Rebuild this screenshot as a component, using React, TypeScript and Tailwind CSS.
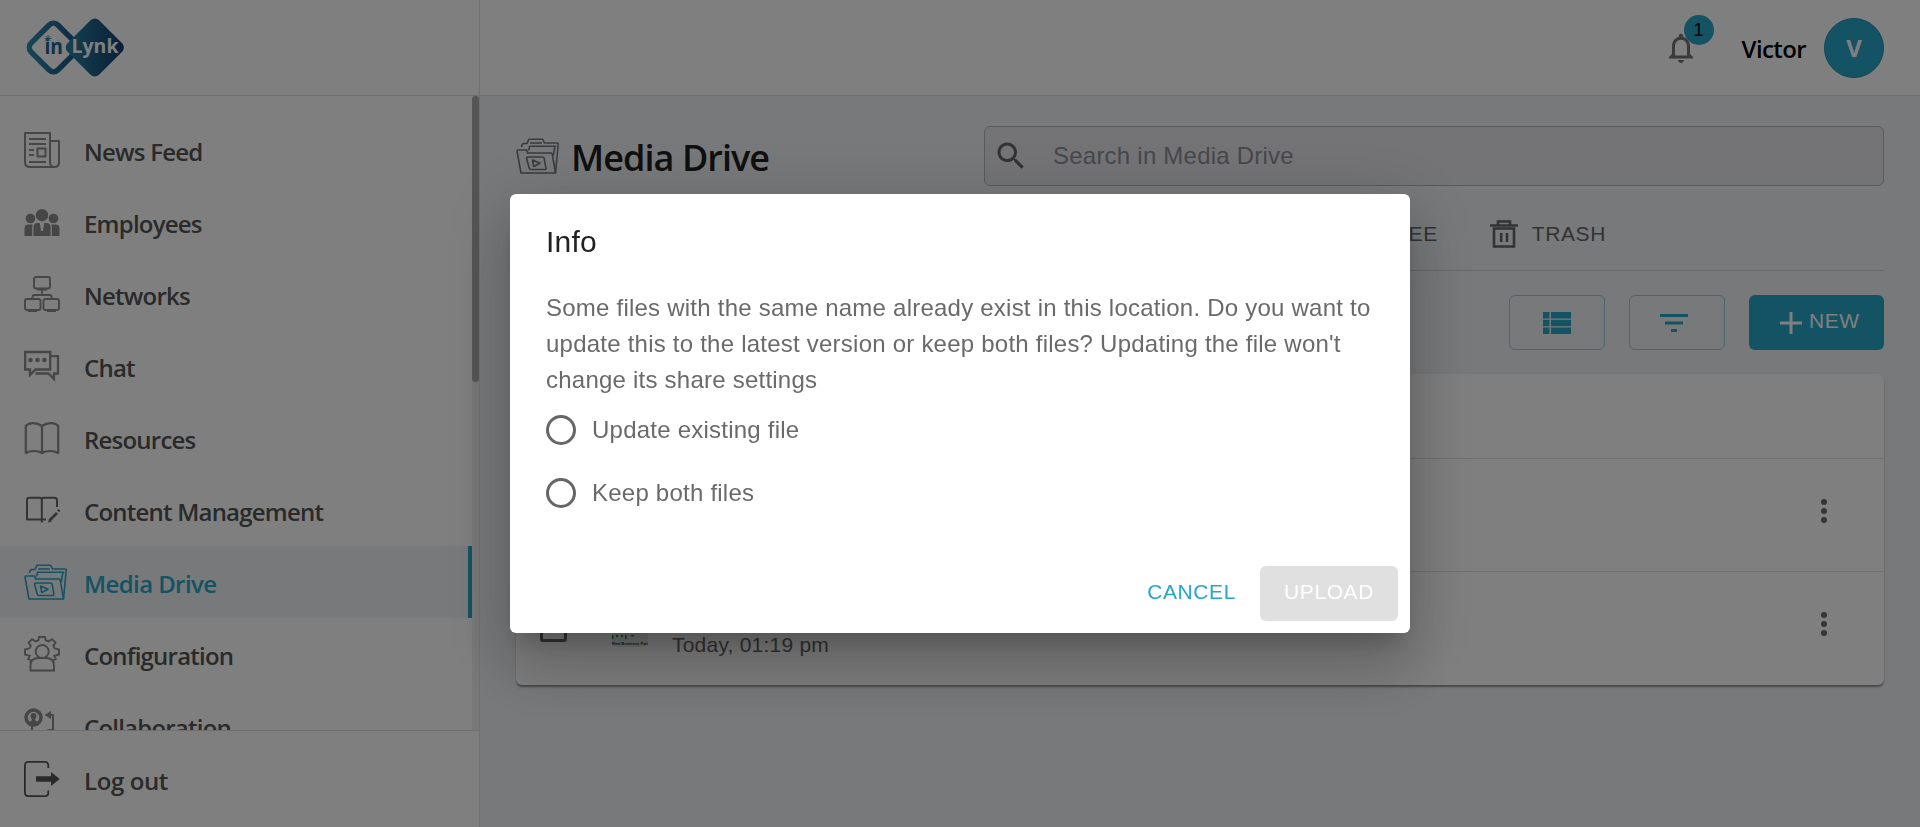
import type { ReactNode } from "react";

const Icon = ({ children, w = 36 }: { children: ReactNode; w?: number }) => (
  <svg
    width={w}
    height="36"
    viewBox={`0 0 ${w} 36`}
    fill="none"
    stroke="currentColor"
    strokeWidth="2"
    strokeLinejoin="round"
    className="shrink-0"
  >
    {children}
  </svg>
);

const NewsIcon = () => (
  <Icon>
    <path d="M1 1h25v29q0 5 4.500 5H6q-5 0-5-5zM26 9h9v21q0 5-4.500 5T26 30" />
    <path d="M5 7h17M5 12h17M5 18h5M5 23h5M5 30h17M13.500 16.500h8v8h-8z" />
  </Icon>
);

const EmployeesIcon = () => (
  <Icon>
    <g fill="currentColor" stroke="none">
      <circle cx="18" cy="11.200" r="6.200" />
      <circle cx="6.500" cy="14.500" r="4.800" />
      <circle cx="29.500" cy="14.500" r="4.800" />
      <path d="M9.500 32V23q0-4 4-4h2.300l1.200 8h2l1.200-8h2.300q4 0 4 4v9z" />
      <path d="M.5 32v-7.500q0-4 3.500-4h4.800q-.6 1.200-.6 3V32zM35.500 32v-7.500q0-4-3.500-4h-4.800q.6 1.200.6 3V32z" />
    </g>
  </Icon>
);

const NetworksIcon = () => (
  <Icon>
    <g strokeWidth="1.900">
      <rect x="10" y="1" width="16" height="11.500" rx="2" />
      <rect x="1" y="23" width="15.500" height="11" rx="2" />
      <rect x="19.500" y="23" width="15.500" height="11" rx="2" />
      <path d="M13 13.500h10M18 13v6M8.500 23v-2q0-2 2-2h15q2 0 2 2v2M4 35.200h9M23 35.200h9" />
    </g>
  </Icon>
);

const ChatIcon = () => (
  <Icon>
    <path
      strokeLinejoin="miter"
      strokeWidth="2.300"
      d="M1.200 4h25v17.500H11.500L6 27V21.500H1.200zM26 8.200h8v17.300h-4v5.500L24.500 25.500H11.500"
    />
    <g fill="currentColor" stroke="none">
      <circle cx="6.500" cy="12" r="2.300" />
      <circle cx="13.500" cy="12" r="2.300" />
      <circle cx="20.500" cy="12" r="2.300" />
    </g>
  </Icon>
);

const BookIcon = () => (
  <Icon>
    <path
      strokeWidth="2.200"
      d="M18 6Q14 3 8.500 3.200 4 3.400 1.800 6v27Q5 31 10 31q5 0 8 2 3-2 8-2 5 0 8.200 2V6Q32 3.400 27.500 3.200 22 3 18 6zm0 0v27"
    />
  </Icon>
);

const ContentIcon = () => (
  <Icon>
    <path d="M22 27.500h-4.200v3M17.800 27.500H3V8q0-2.200 2.500-2.200h10q2.300 0 2.300 2 0-2 2.300-2h10q2.900 0 2.900 2.400V15M17.800 8v19.500" />
    <path strokeWidth="2.600" d="M26 28l7-7" />
    <path fill="currentColor" stroke="none" d="M24 30.500l1-4 3 3zM33 18.200l1.500-1.200 1.800 1.800-1.300 1.500z" />
  </Icon>
);

const MediaIcon = () => (
  <Icon w={43}>
    <g strokeWidth="1.600">
      <path d="M1 13q0-1 1-1h8q.8 0 1 .8l.6 2.200H35q1 0 1.200 1L39.500 35H5z" />
      <path d="M5.500 9q.3-3.500 2.500-3.500h3L13 1.200h13.500L28.500 5H41q1.300 0 1.200 1.200L39.500 35" />
      <path d="M12.500 12.500l1.200-4.300h26.500M38.800 9l-1.600 9M14 5h12" />
      <path d="M12 19h14.500q1.300 0 1.600 1.200l1.800 10q.2 1.300-1 1.300H15q-1.400 0-1.700-1.200L10.600 20.500Q10.400 19 12 19z" />
      <path d="M16.500 22l7.500 3.300-6.300 3.200z" />
    </g>
  </Icon>
);

const ConfigIcon = () => (
  <Icon>
    <g strokeWidth="1.900" strokeLinejoin="miter">
      <path d="M6 27l1.500-2.500-3.300-1.500 1.500-3.200L1 18.500v-5l4.500-1.200 1.300-2.600L4.600 6.500 8 3.200l3.700 2.200 2.700-1.100L15 1h6l.7 3.300 2.700 1.100L28.200 3.200l3.300 3.300-2.200 3.200 1.300 2.600L35 13.500v5l-4.700 1.300 1.500 3.200-3.300 1.500L30 27" />
      <circle cx="18.200" cy="15.500" r="6.500" />
      <path d="M6.500 34.500v-4.500q0-8 8-8h7.500q8 0 8 8v4.500z" />
    </g>
  </Icon>
);

const CollabIcon = () => (
  <Icon>
    <circle cx="9.500" cy="9.500" r="7.500" strokeWidth="3.500" />
    <g fill="currentColor" stroke="none">
      <circle cx="9.500" cy="8" r="3" />
      <path d="M7.800 10h3.400v2.500l4.600 2.500-2.200 3H5.200L3 15l4.800-2.500zM27 3v8l-6.500-4zM18.500 25q3-4 8.500-4t8 4v4H18.500z" />
    </g>
    <path d="M8 18v8M25 7h4v15" />
  </Icon>
);

const LogoutIcon = () => (
  <Icon>
    <path strokeWidth="1.800" d="M24.300 7V4.500q0-3.600-3.500-3.600H4.500Q.9.900.9 4.500v27q0 3.600 3.600 3.600h16.300q3.500 0 3.500-3.600V29.500" />
    <path fill="currentColor" stroke="none" d="M12 15.300h15V11l8.700 7-8.700 7v-4.300H12z" />
  </Icon>
);

const Logo = () => (
  <svg width="102" height="60" viewBox="0 0 102 60">
    <defs>
      <linearGradient id="ring" x1="0" y1="1" x2="1" y2="0">
        <stop offset="0" stopColor="#2a8fae" />
        <stop offset="1" stopColor="#1b4f86" />
      </linearGradient>
      <linearGradient id="solid" x1="0" y1="1" x2="1" y2="0">
        <stop offset=".1" stopColor="#27809e" />
        <stop offset="1" stopColor="#153a6c" />
      </linearGradient>
    </defs>
    <rect x="10.500" y="10.500" width="38" height="38" rx="6.500" transform="rotate(45 29.500 29.500)" fill="none" stroke="url(#ring)" strokeWidth="5.500" />
    <rect x="48.500" y="7.200" width="44.600" height="44.600" rx="6" transform="rotate(45 70.800 29.500)" fill="url(#solid)" />
    <text x="20.500" y="35.500" fontFamily="Open Sans, sans-serif" fontWeight="700" fontSize="20.500" textLength="18.500" lengthAdjust="spacingAndGlyphs" fill="#1d6292">in</text>
    <text x="47.500" y="35" fontFamily="Open Sans, sans-serif" fontWeight="700" fontSize="20" textLength="47" lengthAdjust="spacingAndGlyphs" fill="#ffffff">Lynk</text>
    <path d="M24 17v7M20.500 20.500h7M21.500 18l5 5M26.500 18l-5 5" stroke="#2a86a8" strokeWidth=".8" />
  </svg>
);

const NAV = [
  { label: "News Feed", icon: <NewsIcon /> },
  { label: "Employees", icon: <EmployeesIcon /> },
  { label: "Networks", icon: <NetworksIcon /> },
  { label: "Chat", icon: <ChatIcon /> },
  { label: "Resources", icon: <BookIcon /> },
  { label: "Content Management", icon: <ContentIcon />, dark: true },
  { label: "Media Drive", icon: <MediaIcon />, active: true },
  { label: "Configuration", icon: <ConfigIcon /> },
  { label: "Collaboration", icon: <CollabIcon /> },
];

const Sidebar = () => (
  <aside className="flex w-[480px] shrink-0 flex-col border-r border-[#e0e0e0] bg-white font-['Open_Sans',sans-serif] text-2xl font-semibold text-[#545454]">
    <div className="flex h-24 shrink-0 items-start border-b border-[#dedede] pt-[18px] pl-6">
      <Logo />
    </div>
    <div className="flex min-h-0 flex-1">
      <nav className="min-w-0 flex-1 overflow-hidden pt-[18px] tracking-[-0.78px]">
        {NAV.map((n) => (
          <div
            key={n.label}
            className={
              n.active
                ? "flex h-[72px] items-center border-r-4 border-[#28a6c8] bg-[#f0f3f6] pl-6 tracking-[-0.6px] text-[#28a6c8]"
                : "flex h-[72px] items-center pl-6"
            }
          >
            <span className={n.active ? "w-[60px]" : n.dark ? "w-[60px] text-[#666]" : "w-[60px] text-[#8c8c8c]"}>{n.icon}</span>
            <span className="pt-[3px]">{n.label}</span>
          </div>
        ))}
      </nav>
      <div className="w-[7px] bg-[#f0f0f0]">
        <div className="h-[286px] rounded-full bg-[#a8aaa8]" />
      </div>
    </div>
    <div className="flex h-[97px] shrink-0 items-center border-t border-[#dedede] pl-6">
      <span className="w-[60px] text-[#545454]"><LogoutIcon /></span>
      <span className="pt-[3px] tracking-[-0.4px]">Log out</span>
    </div>
  </aside>
);

const Header = () => (
  <header className="flex h-24 shrink-0 items-start justify-end border-b border-[#dedede] bg-white pr-9 font-['Open_Sans',sans-serif]">
    <div className="relative mt-[30px] mr-[43px] h-9 w-9">
      <svg width="36" height="36" viewBox="0 0 24 24" fill="#757575">
        <path d="M12 22c1.100 0 2-.9 2-2h-4c0 1.100.9 2 2 2zm6-6v-5c0-3.070-1.630-5.640-4.500-6.320V4c0-.83-.67-1.500-1.500-1.500s-1.500.67-1.500 1.500v.68C7.640 5.360 6 7.920 6 11v5l-2 2v1h16v-1l-2-2zm-2 1H8v-6c0-2.480 1.510-4.500 4-4.500s4 2.020 4 4.500v6z" />
      </svg>
      <span className="absolute -top-[15px] left-[21px] flex h-[30px] w-[30px] items-center justify-center rounded-full bg-[#28a6c8] font-['Liberation_Sans',sans-serif] text-lg text-black">
        1
      </span>
    </div>
    <span className="mt-[31px] mr-[18px] text-2xl leading-[36px] font-semibold tracking-[-0.6px] text-black">Victor</span>
    <span className="mt-[18px] flex h-[60px] w-[60px] items-center justify-center rounded-full border border-[#208fae] bg-[#28a6c8] text-2xl font-bold text-white">
      V
    </span>
  </header>
);

const Kebab = () => (
  <svg width="36" height="36" viewBox="0 0 36 36" fill="#6b6b6b">
    <circle cx="18" cy="9" r="3" />
    <circle cx="18" cy="18" r="3" />
    <circle cx="18" cy="27" r="3" />
  </svg>
);

const Drive = () => (
  <main className="flex flex-1 flex-col bg-[#f0f3f6] px-9 pt-[30px]">
    <div className="flex items-center justify-between">
      <div className="flex items-center gap-3">
        <span className="text-[#777]"><MediaIcon /></span>
        <h1 className="pt-1 font-['Open_Sans',sans-serif] text-4xl leading-[48px] font-semibold tracking-[-0.95px] text-[#202020]">Media Drive</h1>
      </div>
      <div className="flex h-[60px] w-[900px] items-center rounded-md border border-[#b4b6ba] bg-[#e8e9ef] pl-2">
        <svg width="36" height="36" viewBox="0 0 24 24" fill="#666">
          <path d="M15.500 14h-.79l-.28-.27C15.410 12.590 16 11.110 16 9.500 16 5.910 13.090 3 9.500 3S3 5.910 3 9.500 5.910 16 9.500 16c1.610 0 3.090-.59 4.230-1.570l.27.28v.79l5 4.990L20.490 19l-4.990-5zm-6 0C7.010 14 5 11.990 5 9.500S7.010 5 9.500 5 14 7.010 14 9.500 11.990 14 9.500 14z" />
        </svg>
        <span className="ml-6 text-2xl tracking-[0.23px] text-[#8f9095]">Search in Media Drive</span>
      </div>
    </div>
    <div className="flex h-[85px] items-center justify-end border-b border-[#cfd1d3] pr-[278px] pt-3 text-[21px] tracking-[0.6px] text-[#666]">
      <span className="mr-[48px]">EMPLOYEE</span>
      <svg width="36" height="36" viewBox="0 0 36 36" fill="none" stroke="#666" strokeWidth="2.600">
        <path d="M4 9.500h28M12 9V5.500h12V9M8 12.500h20v18H8zM15.200 17v9M21 17v9" />
      </svg>
      <span className="ml-[10px]">TRASH</span>
    </div>
    <div className="flex justify-end gap-6 pt-6">
      <div className="flex h-[55px] w-24 items-center justify-center rounded-md border border-[#90cfdf]">
        <svg width="28" height="22" viewBox="0 0 28 22" fill="#28a6c8">
          <path d="M0 0h6.500v6.500H0zM8 0h20v6.500H8zM0 7.800h6.500v6.400H0zM8 7.800h20v6.400H8zM0 15.500h6.500V22H0zM8 15.500h20V22H8z" />
        </svg>
      </div>
      <div className="flex h-[55px] w-24 items-center justify-center rounded-md border border-[#90cfdf]">
        <svg width="28" height="18" viewBox="0 0 28 18" fill="#28a6c8" className="mr-1.5">
          <path d="M0 0h28v3H0zM5 7.500h18v3H5zM11 15h6v3h-6z" />
        </svg>
      </div>
      <div className="flex h-[55px] w-[135px] items-center rounded-md bg-[#28a6c8] pl-[31px] text-[21px] tracking-[0.5px] text-white">
        <svg width="22" height="22" viewBox="0 0 22 22" stroke="#fff" strokeWidth="3" className="mr-[7px]">
          <path d="M0 11h22M11 0v22" />
        </svg>
        <span className="pb-[3px]">NEW</span>
      </div>
    </div>
    <div className="mt-6 h-[311px] rounded-md bg-white shadow-[0_3px_1.5px_-1.5px_rgba(0,0,0,.2),0_1.5px_1.5px_0_rgba(0,0,0,.14),0_1.5px_4.5px_0_rgba(0,0,0,.12)]">
      <div className="h-[85px] border-b border-[#e0e0e0]" />
      <div className="flex h-[113px] items-center justify-end border-b border-[#e0e0e0] pr-[42px] pb-2">
        <Kebab />
      </div>
      <div className="flex h-[113px] items-center pr-[42px] pl-6">
        <div className="h-[27px] w-[27px] rounded-[3px] border-3 border-[#666]" />
        <div className="ml-[45px] flex h-9 w-9 flex-col justify-end overflow-hidden rounded-sm bg-[#e6eaea]">
          <svg width="36" height="6" viewBox="0 0 36 6">
            <path d="M0 0h1.500v4H0zM4 0h2v2H4zM9 0h2v2H9zM13 0h1.500v4H13zM19 0h3v1.500h-3z" fill="#1d8f4a" />
          </svg>
          <span className="text-center text-[4px] leading-[6px] font-bold whitespace-nowrap text-[#333]">Real Business Part</span>
        </div>
        <span className="mt-[32px] ml-6 flex-1 text-[21px] leading-[30px] tracking-[0.22px] text-[#666]">Today, 01:19 pm</span>
        <span className="mb-[9px]"><Kebab /></span>
      </div>
    </div>
  </main>
);

const Choice = ({ label }: { label: string }) => (
  <label className="flex h-[63px] items-center">
    <span className="h-[30px] w-[30px] rounded-full border-3 border-[#666]" />
    <span className="ml-4">{label}</span>
  </label>
);

const InfoDialog = () => (
  <div className="fixed inset-0 flex items-center justify-center bg-black/50">
    <div
      role="dialog"
      className="flex h-[439px] w-[900px] flex-col rounded-md bg-white text-2xl tracking-[0.23px] text-[#6a6a6a] shadow-[0_16.5px_22.5px_-10.5px_rgba(0,0,0,.2),0_36px_57px_4.5px_rgba(0,0,0,.14),0_13.5px_69px_12px_rgba(0,0,0,.12)]"
    >
      <h2 className="h-24 px-9 pt-6 text-[30px] leading-[48px] text-[#212121]">Info</h2>
      <div className="flex-1 px-9">
        <p className="leading-9">
          Some files with the same name already exist in this location. Do you want to update this to the latest version or keep both files? Updating the file won't change its share settings
        </p>
        <div>
          <Choice label="Update existing file" />
          <Choice label="Keep both files" />
        </div>
      </div>
      <div className="flex items-center justify-end gap-3 p-3 text-[21px] tracking-[0.6px]">
        <button className="h-[55px] px-3 pb-[3px] text-[#28a6c8]">CANCEL</button>
        <button className="h-[55px] w-[138px] rounded-md bg-[#e0e0e0] pb-[3px] text-white">UPLOAD</button>
      </div>
    </div>
  </div>
);

export default function App() {
  return (
    <div className="flex h-[827px] w-[1920px] overflow-hidden bg-white font-['Liberation_Sans',Arial,sans-serif]">
      <Sidebar />
      <div className="flex min-w-0 flex-1 flex-col">
        <Header />
        <Drive />
      </div>
      <InfoDialog />
    </div>
  );
}
